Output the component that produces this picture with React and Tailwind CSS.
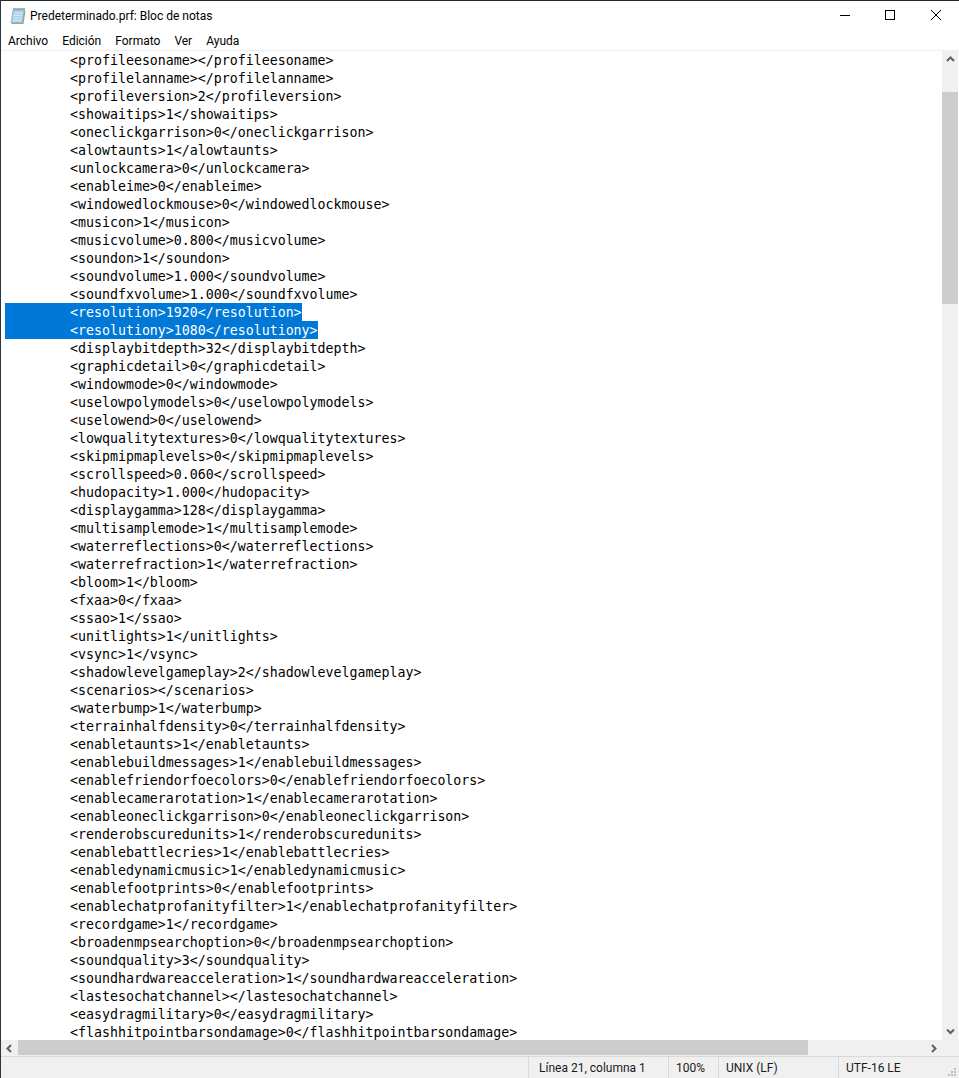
import React from "react";

const lines = [
  "<profileesoname></profileesoname>",
  "<profilelanname></profilelanname>",
  "<profileversion>2</profileversion>",
  "<showaitips>1</showaitips>",
  "<oneclickgarrison>0</oneclickgarrison>",
  "<alowtaunts>1</alowtaunts>",
  "<unlockcamera>0</unlockcamera>",
  "<enableime>0</enableime>",
  "<windowedlockmouse>0</windowedlockmouse>",
  "<musicon>1</musicon>",
  "<musicvolume>0.800</musicvolume>",
  "<soundon>1</soundon>",
  "<soundvolume>1.000</soundvolume>",
  "<soundfxvolume>1.000</soundfxvolume>",
  "<resolution>1920</resolution>",
  "<resolutiony>1080</resolutiony>",
  "<displaybitdepth>32</displaybitdepth>",
  "<graphicdetail>0</graphicdetail>",
  "<windowmode>0</windowmode>",
  "<uselowpolymodels>0</uselowpolymodels>",
  "<uselowend>0</uselowend>",
  "<lowqualitytextures>0</lowqualitytextures>",
  "<skipmipmaplevels>0</skipmipmaplevels>",
  "<scrollspeed>0.060</scrollspeed>",
  "<hudopacity>1.000</hudopacity>",
  "<displaygamma>128</displaygamma>",
  "<multisamplemode>1</multisamplemode>",
  "<waterreflections>0</waterreflections>",
  "<waterrefraction>1</waterrefraction>",
  "<bloom>1</bloom>",
  "<fxaa>0</fxaa>",
  "<ssao>1</ssao>",
  "<unitlights>1</unitlights>",
  "<vsync>1</vsync>",
  "<shadowlevelgameplay>2</shadowlevelgameplay>",
  "<scenarios></scenarios>",
  "<waterbump>1</waterbump>",
  "<terrainhalfdensity>0</terrainhalfdensity>",
  "<enabletaunts>1</enabletaunts>",
  "<enablebuildmessages>1</enablebuildmessages>",
  "<enablefriendorfoecolors>0</enablefriendorfoecolors>",
  "<enablecamerarotation>1</enablecamerarotation>",
  "<enableoneclickgarrison>0</enableoneclickgarrison>",
  "<renderobscuredunits>1</renderobscuredunits>",
  "<enablebattlecries>1</enablebattlecries>",
  "<enabledynamicmusic>1</enabledynamicmusic>",
  "<enablefootprints>0</enablefootprints>",
  "<enablechatprofanityfilter>1</enablechatprofanityfilter>",
  "<recordgame>1</recordgame>",
  "<broadenmpsearchoption>0</broadenmpsearchoption>",
  "<soundquality>3</soundquality>",
  "<soundhardwareacceleration>1</soundhardwareacceleration>",
  "<lastesochatchannel></lastesochatchannel>",
  "<easydragmilitary>0</easydragmilitary>",
  "<flashhitpointbarsondamage>0</flashhitpointbarsondamage>",
];

const menus = ["Archivo", "Edición", "Formato", "Ver", "Ayuda"];

const NotepadIcon = () => (
  <svg width="16" height="17" viewBox="0 0 16 17" className="shrink-0">
    <path d="M4 3h11.5l-2 13H2z" fill="#b59f73" />
    <path d="M3 2h11.5l-2 13H1z" fill="#a9d3e6" stroke="#7aa5b8" strokeWidth="0.7" />
    <path d="M3.5 1h11" stroke="#5d6b73" strokeDasharray="1 1" strokeWidth="2" />
    <path d="M4.5 5h8M4 7.5h8M3.6 10h8M3.2 12.5h8" stroke="#d7edf6" />
  </svg>
);

const Arrow = ({ d }) => (
  <svg width="9" height="9" viewBox="0 0 9 9">
    <path d={d} fill="none" stroke="#606060" strokeWidth="2" />
  </svg>
);

export default function App() {
  return (
    <div className="flex h-[1078px] w-[959px] flex-col overflow-hidden border-l border-t border-l-[#2b3640] border-t-[#1f2a33] bg-white font-['Roboto','Open_Sans',sans-serif] text-black">
      {/* title bar */}
      <div className="flex h-[30px] shrink-0 items-center">
        <div className="flex items-center pl-[9px]">
          <NotepadIcon />
          <span className="ml-[4px] text-[12px] leading-none">Predeterminado.prf: Bloc de notas</span>
        </div>
        <div className="ml-auto flex items-center pb-[2px]">
          <div className="flex w-[46px] justify-center pl-[2px]">
            <div className="h-px w-[10px] bg-black" />
          </div>
          <div className="flex w-[46px] justify-center">
            <div className="h-[10px] w-[10px] border border-black" />
          </div>
          <div className="flex w-[46px] justify-center">
            <svg width="10" height="10" viewBox="0 0 10 10">
              <path d="M0 0l10 10M10 0L0 10" stroke="#000" strokeWidth="1" />
            </svg>
          </div>
        </div>
      </div>

      {/* menu bar */}
      <div className="flex h-[19px] shrink-0 items-center gap-[14px] pl-[7px] pt-px text-[12px] leading-none">
        {menus.map((m) => (
          <span key={m}>{m}</span>
        ))}
      </div>
      <div className="h-[1px] shrink-0 bg-[#f0f0f0]" />

      {/* editor */}
      <div className="flex min-h-0 flex-1">
        <div className="min-w-0 flex-1 overflow-hidden pl-[4px] font-['DejaVu_Sans_Mono','Liberation_Mono',monospace] text-[13.28px] leading-[18px]">
          {lines.map((line, i) => {
            const selected = i === 14 || i === 15;
            return (
              <div key={line} className="flex h-[18px] whitespace-pre">
                <span className={selected ? "bg-[#0078d7] pt-px text-white" : "pt-px"}>
                  <span className="inline-block w-[65px]" />
                  {line}
                </span>
              </div>
            );
          })}
        </div>
        <div className="mr-px flex w-[16px] shrink-0 flex-col bg-[#f0f0f0]">
          <div className="flex h-[17px] items-center justify-center">
            <Arrow d="M1 6l3.5-3.5L8 6" />
          </div>
          <div className="mt-[24px] h-[212px] bg-[#cdcdcd]" />
          <div className="mt-auto flex h-[17px] items-center justify-center">
            <Arrow d="M1 2.5L4.5 6 8 2.5" />
          </div>
        </div>
      </div>

      {/* horizontal scrollbar */}
      <div className="flex h-[16px] shrink-0 bg-[#f0f0f0]">
        <div className="flex w-[17px] items-center justify-center">
          <Arrow d="M6 1L2.5 4.5 6 8" />
        </div>
        <div className="h-[15px] w-[790px] bg-[#cdcdcd]" />
        <div className="ml-auto mr-[16px] flex w-[17px] items-center justify-center">
          <Arrow d="M2 1l3.5 3.5L2 8" />
        </div>
      </div>

      {/* status bar */}
      <div className="relative flex h-[22px] shrink-0 items-center border-t border-[#d9d9d9] bg-[#f0f0f0] text-[12px] leading-none text-[#1a1a1a]">
        <div className="w-[527px]" />
        <div className="flex h-full w-[140px] items-center border-l border-[#d9d9d9] pl-[10px] pt-px">Línea 21, columna 1</div>
        <div className="flex h-full w-[50px] items-center border-l border-[#d9d9d9] pl-[7px] pt-px">100%</div>
        <div className="flex h-full w-[120px] items-center border-l border-[#d9d9d9] pl-[7px] pt-px">UNIX (LF)</div>
        <div className="flex h-full flex-1 items-center border-l border-[#d9d9d9] pl-[7px] pt-px">UTF-16 LE</div>
        <svg width="10" height="10" viewBox="0 0 10 10" className="absolute bottom-0 right-[1px]">
          <path d="M6 0h2v2H6zM3 3h2v2H3zM6 3h2v2H6zM0 6h2v2H0zM3 6h2v2H3zM6 6h2v2H6z" fill="#bdbdbd" />
        </svg>
      </div>
    </div>
  );
}
